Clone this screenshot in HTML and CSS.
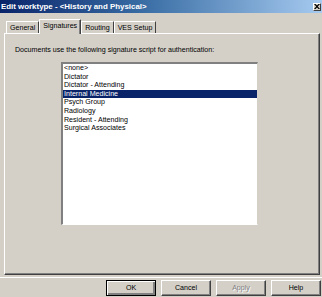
FILE: index.html
```html
<!DOCTYPE html>
<html>
<head>
<meta charset="utf-8">
<link rel="stylesheet" href="styles.css">
</head>
<body>
<div class="window">
  <div class="titlebar">
    <span class="title">Edit worktype - &lt;History and Physical&gt;</span>
    <span class="close">
      <svg width="6" height="5" viewBox="0 0 6 5"><path d="M0 0h1.5l1.5 1.5 1.5-1.5h1.5l-2.2 2.5 2.2 2.5h-1.5l-1.5-1.5-1.5 1.5h-1.5l2.2-2.5z" fill="#000"/></svg>
    </span>
  </div>
  <div class="tabs">
    <div class="tab first">General</div>
    <div class="tab active">Signatures</div>
    <div class="tab">Routing</div>
    <div class="tab">VES Setup</div>
  </div>
  <div class="panel">
    <p class="label">Documents use the following signature script for authentication:</p>
    <div class="listbox">
      <div class="item">&lt;none&gt;</div>
      <div class="item">Dictator</div>
      <div class="item">Dictator - Attending</div>
      <div class="item selected">Internal Medicine</div>
      <div class="item">Psych Group</div>
      <div class="item">Radiology</div>
      <div class="item">Resident - Attending</div>
      <div class="item">Surgical Associates</div>
    </div>
  </div>
  <div class="separator"></div>
  <div class="buttons">
    <div class="btn default">OK</div>
    <div class="btn">Cancel</div>
    <div class="btn disabled">Apply</div>
    <div class="btn">Help</div>
  </div>
</div>
</body>
</html>
```
FILE: styles.css
```css
html, body {
  margin: 0;
  padding: 0;
  background: #d4d0c8;
}
.window {
  width: 322px;
  height: 297px;
  background: #d4d0c8;
  display: flex;
  flex-direction: column;
  font-family: "Liberation Sans", Arial, sans-serif;
  font-size: 7.1px;
  color: #000;
  overflow: hidden;
}
.titlebar {
  height: 13px;
  display: flex;
  align-items: center;
  background: linear-gradient(to right, #0a246a 0%, #3a6ea5 45%, #a6caf0 100%);
  padding: 0 1px 0 1px;
  box-sizing: border-box;
}
.title {
  color: #fff;
  font-weight: bold;
  font-size: 7.9px;
  white-space: nowrap;
}
.close {
  margin-left: auto;
  width: 8px;
  height: 8px;
  background: #d4d0c8;
  border: 1px solid;
  border-color: #fff #404040 #404040 #fff;
  box-sizing: border-box;
  display: flex;
  align-items: center;
  justify-content: center;
}
.tabs {
  display: flex;
  align-items: flex-end;
  height: 15px;
  margin-top: 5px;
  padding-left: 6px;
  position: relative;
  z-index: 1;
}
.tab {
  height: 12px;
  box-sizing: border-box;
  padding: 0 3px;
  display: flex;
  align-items: center;
  border-top: 1px solid #fff;
  border-left: 1px solid #fff;
  border-right: 1px solid #404040;
  white-space: nowrap;
}
.tab.active {
  height: 15px;
  margin-bottom: -1px;
  padding: 0 3px 2px 3px;
  background: #d4d0c8;
  box-shadow: inset -1px 0 0 #808080;
}
.panel {
  margin: 0 2px 0 4px;
  height: 242px;
  box-sizing: border-box;
  border-top: 1px solid #fff;
  border-left: 1px solid #fff;
  border-right: 1px solid #404040;
  border-bottom: 1px solid #404040;
  box-shadow: inset -1px -1px 0 #808080;
  padding: 12px 0 0 10px;
}
.label {
  margin: 0;
  line-height: 9px;
  white-space: nowrap;
}
.listbox {
  margin: 7px 0 0 46px;
  width: 197px;
  height: 163px;
  box-sizing: border-box;
  background: #fff;
  border-top: 2px solid #808080;
  border-left: 2px solid #808080;
  border-right: 1px solid #d4d0c8;
  border-bottom: 1px solid #fff;
  padding-top: 0;
}
.item {
  height: 8.6px;
  line-height: 8.6px;
  padding-left: 1px;
  white-space: nowrap;
}
.item.selected {
  background: #0a246a;
  color: #fff;
}
.separator {
  margin: 2px 0 0 0;
  height: 1px;
  background: #fff;
}
.buttons {
  display: flex;
  justify-content: flex-end;
  gap: 5px;
  padding: 2px 1px 0 0;
}
.btn {
  width: 50px;
  height: 16px;
  box-sizing: border-box;
  display: flex;
  align-items: center;
  justify-content: center;
  background: #d4d0c8;
  border-top: 1px solid #fff;
  border-left: 1px solid #fff;
  border-right: 1px solid #404040;
  border-bottom: 1px solid #404040;
  box-shadow: inset -1px -1px 0 #808080;
}
.btn.default {
  border: 1px solid #000;
  box-shadow: inset 1px 1px 0 #fff, inset -2px -2px 0 #808080;
}
.btn.disabled {
  color: #808080;
  text-shadow: 1px 1px 0 #fff;
}
```
